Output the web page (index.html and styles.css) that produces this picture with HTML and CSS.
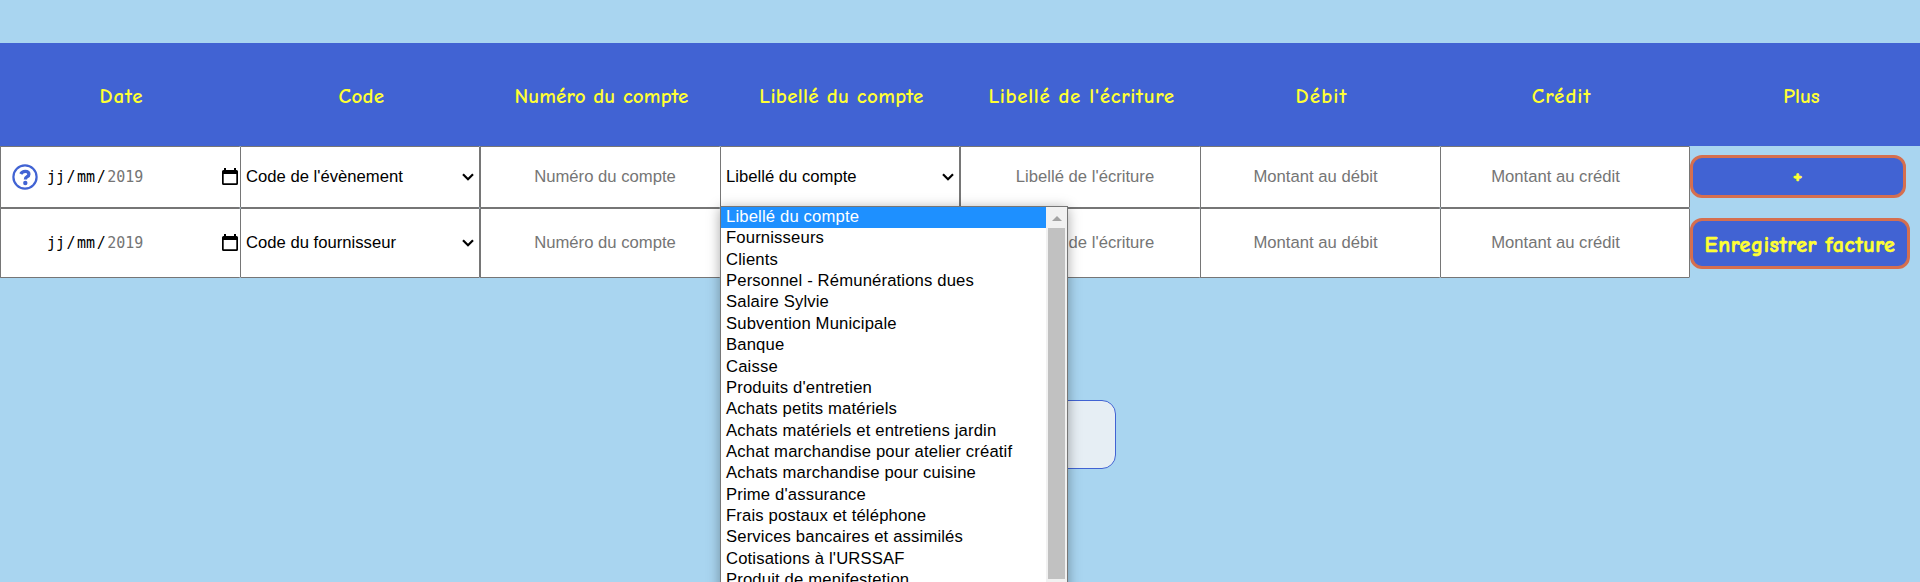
FILE: index.html
```html
<!DOCTYPE html>
<html lang="fr">
<head>
<meta charset="utf-8">
<title>Saisie des écritures</title>
<link rel="stylesheet" href="styles.css">
</head>
<body>
<svg class="defs" width="0" height="0" aria-hidden="true">
  <symbol id="calendar" viewBox="0 0 16 18"><path fill-rule="evenodd" d="M2 2V0h2v2h8V0h2v2h.5Q16 2 16 3.500v12Q16 17 14.500 17h-13Q0 17 0 15.500v-12Q0 2 1.500 2zM1.700 6v9.300h12.600V6z"/></symbol>
  <symbol id="chevron" viewBox="0 0 12 8"><path d="M1 1.200l5 5 5-5" fill="none" stroke="#000" stroke-width="2.200"/></symbol>
</svg>
<main class="page">
  <header class="head">
    <span class="h h-date">Date</span><span class="h h-code">Code</span><span class="h h-num">Numéro du compte</span><span class="h h-lib">Libellé du compte</span><span class="h h-ecr">Libellé de l'écriture</span><span class="h h-deb">Débit</span><span class="h h-cred">Crédit</span><span class="h h-plus">Plus</span>
  </header>
  <section class="row first">
    <div class="cell date">
      <svg class="help" viewBox="0 0 26 26"><circle cx="13" cy="13" r="11.600" fill="none" stroke="#4163d3" stroke-width="2.200"/><path d="M8.800 9.900Q10.100 7.300 13.200 7.300Q16.900 7.300 16.900 10.200Q16.900 11.900 15 12.800Q13.400 13.600 13.400 15.500" fill="none" stroke="#4163d3" stroke-width="3.300"/><circle cx="13.300" cy="19" r="2.200" fill="#4163d3"/></svg>
      <span class="fields"><span>jj</span><span>/</span><span>mm</span><span>/</span><span class="year">2019</span></span>
      <svg class="cal"><use href="#calendar"/></svg>
    </div>
    <div class="cell select"><span>Code de l'évènement</span><svg class="chev"><use href="#chevron"/></svg></div>
    <div class="cell input">Numéro du compte</div>
    <div class="cell select"><span>Libellé du compte</span><svg class="chev"><use href="#chevron"/></svg></div>
    <div class="cell input">Libellé de l'écriture</div>
    <div class="cell input amount">Montant au débit</div>
    <div class="cell input amount last">Montant au crédit</div>
    <div class="action"><button class="btn add">+</button></div>
  </section>
  <section class="row second">
    <div class="cell date">
      <span class="help"></span>
      <span class="fields"><span>jj</span><span>/</span><span>mm</span><span>/</span><span class="year">2019</span></span>
      <svg class="cal"><use href="#calendar"/></svg>
    </div>
    <div class="cell select"><span>Code du fournisseur</span><svg class="chev"><use href="#chevron"/></svg></div>
    <div class="cell input">Numéro du compte</div>
    <div class="cell select"></div>
    <div class="cell input">Libellé de l'écriture</div>
    <div class="cell input amount">Montant au débit</div>
    <div class="cell input amount last">Montant au crédit</div>
    <div class="action"><button class="btn save">Enregistrer facture</button></div>
  </section>
  <div class="panel"></div>
  <div class="popup">
    <ul class="options">
      <li class="active">Libellé du compte</li>
      <li>Fournisseurs</li>
      <li>Clients</li>
      <li>Personnel - Rémunérations dues</li>
      <li>Salaire Sylvie</li>
      <li>Subvention Municipale</li>
      <li>Banque</li>
      <li>Caisse</li>
      <li>Produits d'entretien</li>
      <li>Achats petits matériels</li>
      <li>Achats matériels et entretiens jardin</li>
      <li>Achat marchandise pour atelier créatif</li>
      <li>Achats marchandise pour cuisine</li>
      <li>Prime d'assurance</li>
      <li>Frais postaux et téléphone</li>
      <li>Services bancaires et assimilés</li>
      <li>Cotisations à l'URSSAF</li>
      <li>Produit de menifestetion</li>
    </ul>
    <div class="scroll"><svg class="up" viewBox="0 0 10 5"><path d="M0 5l5-5 5 5z"/></svg><div class="thumb"></div></div>
  </div>
</main>
</body>
</html>
```
FILE: styles.css
```css
* { box-sizing: border-box; }
body { margin: 0; background: #a9d5f0; font: 16.67px/20px "Liberation Sans", Arial, sans-serif; }
.defs { display: block; }
.page { position: relative; height: 582px; padding-top: 43px; overflow: hidden; }
.head { display: grid; grid-template-columns: repeat(8, 240px); height: 103px; align-items: center; background: #4163d3; color: #ffff33; font: 700 21px/28px "Comic Sans MS", "Comic Neue", "Noto Sans", sans-serif; }
.h { padding: 3px 0 0 3px; text-align: center; white-space: nowrap; }
.h-date { letter-spacing: .9px; }
.h-code { letter-spacing: .3px; }
.h-num { letter-spacing: .1px; }
.h-lib { letter-spacing: .3px; }
.h-ecr { letter-spacing: .65px; }
.h-deb { letter-spacing: 1.100px; }
.h-cred { letter-spacing: 1px; }
.row { display: grid; grid-template-columns: repeat(6, 240px) 250px 1fr; }
.first { height: 62px; }
.second { height: 70px; }
.cell { display: flex; align-items: center; border: 1px solid #767676; border-radius: 1px; background: #fff; white-space: nowrap; }
.input { justify-content: center; padding: 0 0 0 9px; border-right: 0; color: #757575; }
.amount { padding: 0 10px 0 0; }
.last { padding-right: 19px; border-right: 1px solid #767676; }
.date { border-right: 0; padding-left: 11px; }
.help { width: 26px; height: 26px; flex: none; }
.fields { display: flex; gap: 1.500px; margin-left: 9px; font: 15px/20px "DejaVu Sans Mono", monospace; }
.year { color: #757575; }
.cal { width: 16px; height: 18px; margin: 0 2px 0 auto; }
.select { justify-content: space-between; padding: 0 5px; }
.chev { width: 12px; height: 8px; }
.action { display: flex; align-items: center; }
.btn { border: 3px solid #d56f4f; border-radius: 12px; padding: 0; background: #4163d3; color: #ffff33; font: 700 22px/24px "Comic Sans MS", "Comic Neue", "Noto Sans", sans-serif; letter-spacing: .6px; white-space: nowrap; -webkit-text-stroke: .6px #ffff33; }
.add { width: 216px; height: 43px; margin-bottom: 1px; padding-bottom: 2px; }
.save { width: 220px; height: 51px; padding-top: 3px; }
.panel { width: 312px; height: 69px; margin: 122px auto 0; border: 1px solid #4163d3; border-radius: 14px; background: #e6eef4; }
.popup { position: absolute; left: 720px; top: 206px; display: flex; width: 348px; height: 395px; border: 1px solid #767676; background: #fff; box-shadow: 0 2px 12px rgba(0, 0, 0, .35); }
.options { flex: 1; margin: 0; padding: 0; list-style: none; letter-spacing: .15px; }
.options li { height: 21.370px; padding-left: 5px; line-height: 20px; white-space: nowrap; }
.options .active { background: #1e90ff; color: #fff; }
.scroll { width: 21px; padding: 0 2px; background: #f1f1f1; }
.up { display: block; width: 10px; height: 5px; margin: 9px 0 7px 4px; fill: #a3a3a3; }
.thumb { height: 351px; background: #c1c1c1; }
```
